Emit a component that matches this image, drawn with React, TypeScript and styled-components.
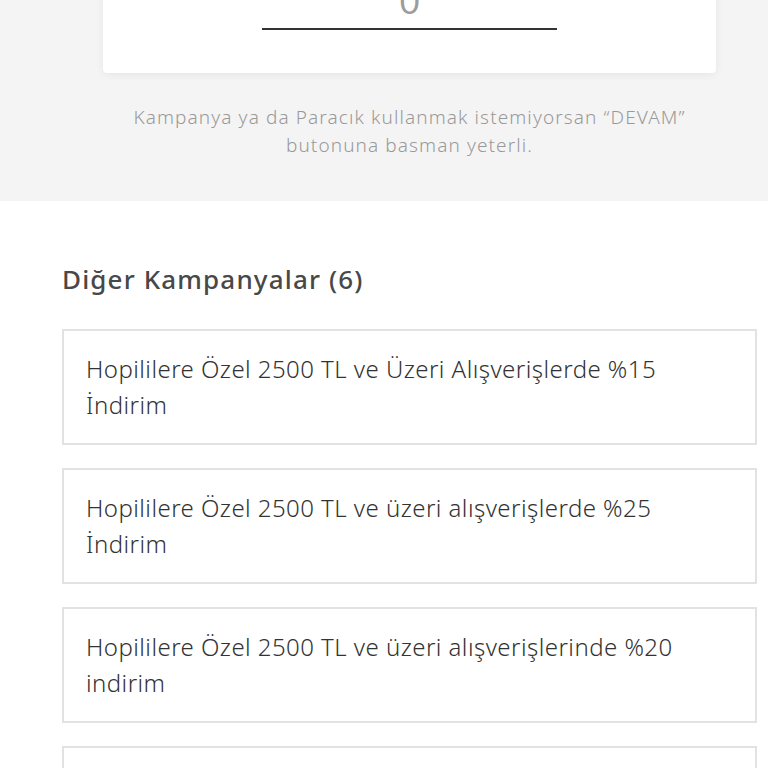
import styled, { createGlobalStyle } from "styled-components"

const GlobalStyle = createGlobalStyle`
    html, body {
        margin: 0;
        padding: 0;
        background: #ffffff;
        font-family: "Noto Sans", Lato, sans-serif;
        overflow: hidden;
    }
`

const campaigns = [
    "Hopililere Özel 2500 TL ve Üzeri Alışverişlerde %15 İndirim",
    "Hopililere Özel 2500 TL ve üzeri alışverişlerde %25 İndirim",
    "Hopililere Özel 2500 TL ve üzeri alışverişlerinde %20 indirim",
    "Hopililere Özel 1500 TL ve üzeri alışverişlerde %10 indirim",
]

const App = () => {
    return (
        <Page>
            <GlobalStyle />
            <TopSection>
                <PointsCard>
                    <AmountField>0</AmountField>
                </PointsCard>
                <Hint>
                    Kampanya ya da Paracık kullanmak istemiyorsan “DEVAM”
                    <br />
                    butonuna basman yeterli.
                </Hint>
            </TopSection>
            <OtherSection>
                <Title>Diğer Kampanyalar (6)</Title>
                <CampaignList>
                    {campaigns.map((c) => (
                        <CampaignCard key={c}>
                            <CampaignText>{c}</CampaignText>
                        </CampaignCard>
                    ))}
                </CampaignList>
            </OtherSection>
        </Page>
    )
}

export default App

const Page = styled.div`
    width: 768px;
    height: 768px;
    overflow: hidden;
    display: flex;
    flex-direction: column;
`

const TopSection = styled.section`
    background-color: #f5f4f4;
    height: 201px;
    flex-shrink: 0;
    display: flex;
    flex-direction: column;
`

const PointsCard = styled.div`
    margin: -40px 0 0 103px;
    width: 613px;
    height: 113px;
    box-sizing: border-box;
    padding-top: 23px;
    background: #ffffff;
    border-radius: 4px;
    box-shadow: 0 2px 8px rgba(0, 0, 0, 0.06);
    display: flex;
    justify-content: center;
`

const AmountField = styled.div`
    width: 295px;
    height: 47px;
    box-sizing: border-box;
    padding-bottom: 9px;
    border-bottom: 2px solid #333333;
    font-family: Lato, sans-serif;
    font-size: 34px;
    line-height: 36px;
    font-weight: 400;
    color: #9c9c9c;
    text-align: center;
`

const Hint = styled.p`
    margin: 30px 0 0 103px;
    width: 613px;
    text-align: center;
    font-size: 19px;
    line-height: 28px;
    font-weight: 300;
    color: #999999;
    letter-spacing: 1.1px;
`

const OtherSection = styled.section`
    padding: 61px 11px 0 62px;
    display: flex;
    flex-direction: column;
`

const Title = styled.h2`
    margin: 0;
    font-size: 26px;
    line-height: 34px;
    font-weight: 500;
    color: #484848;
    letter-spacing: 1.15px;
`

const CampaignList = styled.div`
    margin-top: 33px;
    display: flex;
    flex-direction: column;
    gap: 23px;
`

const CampaignCard = styled.div`
    height: 116px;
    box-sizing: border-box;
    padding: 0 22px;
    border: 2px solid #e2e2e2;
    display: flex;
    align-items: center;
    flex-shrink: 0;
`

const CampaignText = styled.div`
    max-width: 620px;
    font-size: 24px;
    line-height: 36px;
    font-weight: 300;
    color: #333333;
    letter-spacing: 0.45px;
`
